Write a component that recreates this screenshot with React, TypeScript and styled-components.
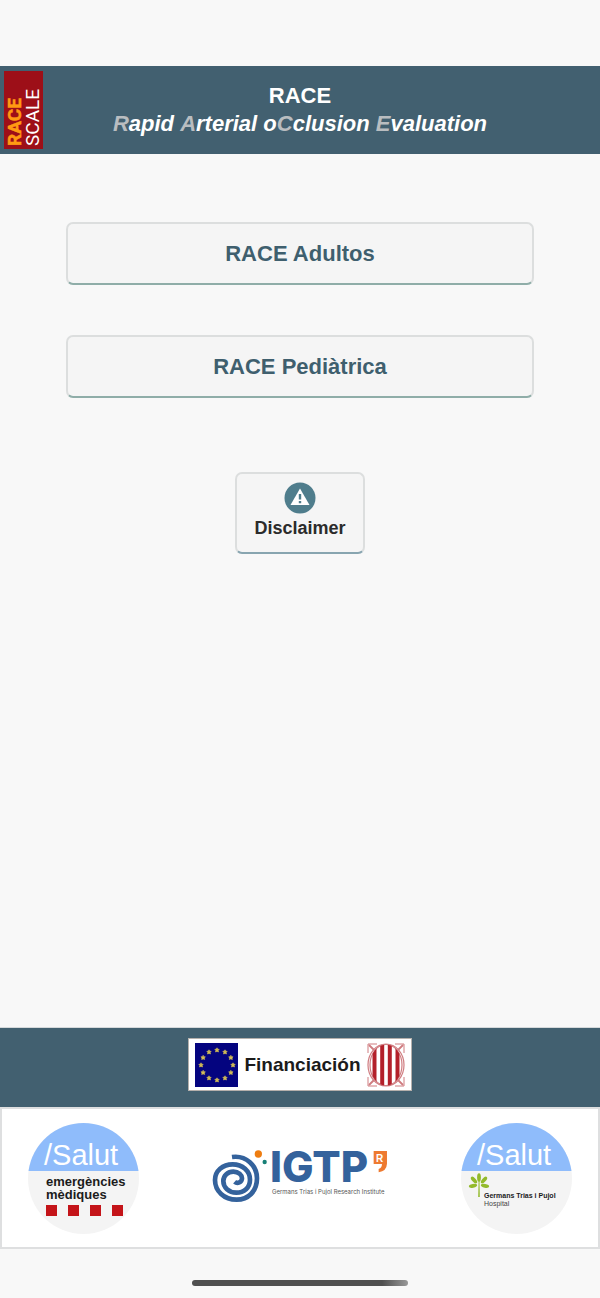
import React from "react";
import styled, { createGlobalStyle } from "styled-components";

const App=()=>{

    return(
        <Container>
            <GlobalStyle />
            <Header>
                <RaceLogo />
                <Title>
                    <h1>RACE</h1>
                    <h2><b>R</b>apid <b>A</b>rterial o<b>C</b>clusion <b>E</b>valuation</h2>
                </Title>
            </Header>
            <Main>
                <Options>
                    <Option type="button">RACE Adultos</Option>
                    <Option type="button">RACE Pediàtrica</Option>
                </Options>
                <Disclaimer type="button">
                    <WarningIcon />
                    Disclaimer
                </Disclaimer>
            </Main>
            <footer>
                <Funding>
                    <FundingCard>
                        <EuropeFlag />
                        <span>Financiación</span>
                        <CatalanEmblem />
                    </FundingCard>
                </Funding>
                <Partners>
                    <EmergencyLogo />
                    <IgtpLogo />
                    <HospitalLogo />
                </Partners>
            </footer>
            <HomeArea><HomeBar /></HomeArea>
        </Container>
    )
}

export default App;

const RaceLogo=()=>(
    <svg width="39" height="78" viewBox="0 0 39 78" role="img" aria-label="RACE scale">
        <rect width="39" height="78" fill="#9d0f18" />
        <g transform="rotate(-90)" fontFamily="Roboto, sans-serif">
            <text x="-75" y="17" fontSize="19" fontWeight="700" fill="#ff9a12" stroke="#ff9a12" strokeWidth=".5">RACE</text>
            <text x="-75" y="35" fontSize="19" fill="#fff">SCALE</text>
        </g>
    </svg>
)

const WarningIcon=()=>(
    <svg width="32" height="32" viewBox="0 0 32 32" aria-hidden="true">
        <circle cx="16" cy="16" r="15.5" fill="#4f7d8c" />
        <path d="M16 6.5 L25.5 23 H6.5 Z" fill="#fff" />
        <path d="M14.8 12 H17.2 V17.5 H14.8 Z M14.8 19 H17.2 V21.2 H14.8 Z" fill="#4f7d8c" />
    </svg>
)

const EuropeFlag=()=>{
    const stars = Array.from({ length: 12 }, (_, i) => (i * Math.PI) / 6);

    return(
        <svg width="43" height="44" viewBox="0 0 43 44" role="img" aria-label="Unión Europea">
            <rect width="43" height="44" fill="#04047f" />
            {stars.map((a) => (
                <path
                    key={a}
                    transform={`translate(${22 + 16 * Math.sin(a)} ${22 - 15 * Math.cos(a)})`}
                    d="M0 -2.2 L.8 -.8 L2.2 -.7 L1.2 .5 L1.5 2 L0 1.4 L-1.5 2 L-1.2 .5 L-2.2 -.7 L-.8 -.8 Z"
                    fill="#d3bd55"
                    stroke="#d3bd55"
                    strokeWidth=".6"
                />
            ))}
        </svg>
    )
}

const CatalanEmblem=()=>(
    <svg width="38" height="44" viewBox="0 0 38 44" role="img" aria-label="Generalitat de Catalunya">
        <clipPath id="shield"><ellipse cx="19" cy="22" rx="16" ry="20.5" /></clipPath>
        <g fill="none" stroke="#cf7c80">
            <path d="M1 10 V1 H10 M28 1 H37 V10 M37 34 V43 H28 M10 43 H1 V34" strokeWidth="1" />
            <path d="M2 2 L7 7 M36 2 L31 7 M36 42 L31 37 M2 42 L7 37" strokeWidth="1.8" />
            <ellipse cx="19" cy="22" rx="18" ry="21" strokeWidth="1.2" />
            <ellipse cx="19" cy="22" rx="16" ry="20.5" strokeWidth="1.2" />
        </g>
        <path clipPath="url(#shield)" d="M7.5 0 V44 M15.2 0 V44 M22.8 0 V44 M30.5 0 V44" stroke="#b3202a" strokeWidth="4" />
    </svg>
)

const SalutCircle=()=>(
    <>
        <circle cx="55.5" cy="55.5" r="55.5" fill="#f4f4f4" />
        <path d="M0.5 48 A55.5 55.5 0 0 1 110.5 48 Z" fill="#8fbcfb" />
        <text x="16" y="42" fontSize="29" fill="#fff">/Salut</text>
    </>
)

const EmergencyLogo=()=>(
    <Badge width="111" height="111" viewBox="0 0 111 111" role="img" aria-label="Salut emergències mèdiques">
        <SalutCircle />
        <g fontSize="13" fontWeight="700" fill="#1b1b1b">
            <text x="18" y="63">emergències</text>
            <text x="18" y="76">mèdiques</text>
        </g>
        <path d="M18 82 h11 v11 h-11 Z M40 82 h11 v11 h-11 Z M62 82 h11 v11 h-11 Z M84 82 h11 v11 h-11 Z" fill="#c41419" />
    </Badge>
)

const HospitalLogo=()=>(
    <Badge width="111" height="111" viewBox="0 0 111 111" role="img" aria-label="Salut Germans Trias i Pujol Hospital">
        <SalutCircle />
        <g fill="#93ba2c">
            <ellipse cx="18" cy="54.5" rx="1.9" ry="4.2" />
            <ellipse cx="13" cy="57" rx="1.9" ry="4.2" transform="rotate(-42 13 57)" />
            <ellipse cx="23" cy="57" rx="1.9" ry="4.2" transform="rotate(42 23 57)" />
            <ellipse cx="12" cy="62.8" rx="4.2" ry="1.9" transform="rotate(-10 12 62.8)" />
            <ellipse cx="24" cy="62.8" rx="4.2" ry="1.9" transform="rotate(10 24 62.8)" />
            <path d="M17.6 58 H18.5 L18.8 74 H17.2 Z" />
        </g>
        <text x="23" y="75" fontSize="7" fontWeight="700" fill="#1b1b1b">Germans Trias i Pujol</text>
        <text x="23" y="83" fontSize="7" fill="#444">Hospital</text>
    </Badge>
)

const IgtpLogo=()=>(
    <Badge width="176" height="60" viewBox="0 0 176 60" role="img" aria-label="IGTP Germans Trias i Pujol Research Institute">
        <g transform="translate(-4 -4) scale(.3333)">
            <path
                d="M72 36 C115 30 147 62 147 100 C147 140 120 164 86 164 C48 164 21 138 21 105 C21 78 44 58 74 58 C104 58 126 78 126 104 C126 128 108 143 85 143 C62 143 46 127 46 108 C46 92 60 80 76 80 C92 80 102 90 102 100 C102 112 88 117 80 110"
                fill="none"
                stroke="#34629c"
                strokeWidth="14"
            />
            <circle cx="151" cy="27" r="11" fill="#ee7d11" />
            <circle cx="170" cy="51" r="6.5" fill="#178077" />
            <path d="M497 18 H537 V56 Q536 78 512 82 V72 Q522 69 522 57 H497 Z" fill="#ee7a30" />
        </g>
        <text x="58" y="33" fontFamily="Inter, sans-serif" fontSize="42" fontWeight="800" fill="#34629c">IGTP</text>
        <text x="164" y="13" fontSize="10" fontWeight="700" fill="#fff">R</text>
        <text x="60" y="45" fontFamily="Inter, sans-serif" fontSize="6" fill="#555">Germans Trias i Pujol Research Institute</text>
    </Badge>
)

const GlobalStyle = createGlobalStyle`
*{
    box-sizing: border-box;
}
body{
    margin: 0;
    background-color: #f8f8f8;
    font-family: "Liberation Sans", Arial, sans-serif;
}
`

const Container = styled.div`
width: 100%;
min-height: 100vh;
padding-top: 66px;
display: flex;
flex-direction: column;
`

const Header = styled.header`
background-color: #426070;
padding: 5px 4px;
display: grid;
grid-template-columns: 40px 1fr 40px;
align-items: center;

svg{
    display: block;
}
`

const Title = styled.div`
text-align: center;
color: #fff;

h1, h2{
    margin: 0;
    font-size: 22px;
    line-height: 28px;
    font-weight: 700;
}
h2{
    font-style: italic;
}
b{
    color: #b9bdc0;
}
`

const Main = styled.main`
flex: 1;
padding: 68px 11%;
display: flex;
flex-direction: column;
align-items: center;
gap: 74px;
`

const Options = styled.div`
width: 100%;
display: flex;
flex-direction: column;
gap: 50px;
`

const Option = styled.button`
width: 100%;
padding: 16px;
border: 2px solid #dcdede;
border-bottom-color: #8fada8;
border-radius: 7px;
background-color: #f5f5f5;
color: #3f5f6e;
font: inherit;
font-size: 22px;
font-weight: 700;
line-height: 27px;
cursor: pointer;
`

const Disclaimer = styled(Option)`
width: auto;
padding: 8px 17px 10px;
border-bottom-color: #88a5b0;
color: #2b2b2b;
font-size: 18px;
display: flex;
flex-direction: column;
align-items: center;
gap: 1px;
`

const Funding = styled.section`
padding: 10px 10px 16px;
border-top: 1px solid #d5d9db;
background-color: #426070;
display: flex;
justify-content: center;
`

const FundingCard = styled.div`
padding: 4px 6px 3px;
border: 1px solid #b5b0ac;
background-color: #fff;
display: flex;
align-items: center;
gap: 6px;
color: #1b1b1b;
font-size: 19px;
font-weight: 700;

svg{
    display: block;
}
`

const Partners = styled.section`
padding: 14px 26px 13px;
border: 2px solid #dedfe0;
background-color: #fff;
display: flex;
justify-content: space-between;
align-items: center;
`

const Badge = styled.svg`
display: block;
overflow: visible;
font-family: "Liberation Sans", Arial, sans-serif;
`

const HomeArea = styled.div`
padding: 31px 0 12px;
display: flex;
justify-content: center;
`

const HomeBar = styled.div`
width: 36%;
height: 6px;
border-radius: 3px;
background: linear-gradient(90deg, #505050 88%, #999 100%);
`
